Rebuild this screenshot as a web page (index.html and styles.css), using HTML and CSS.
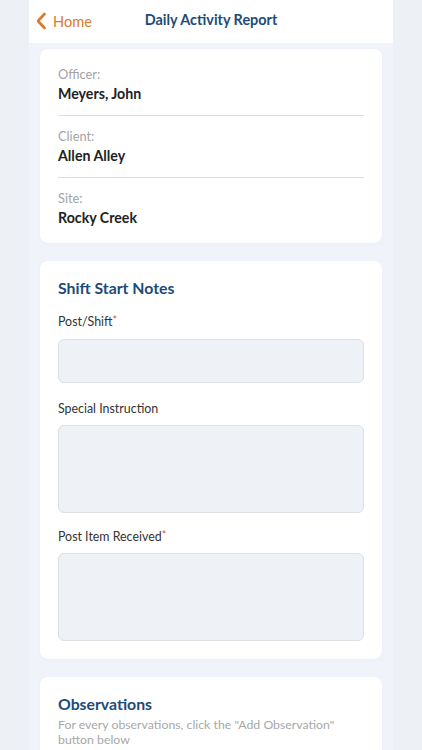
FILE: index.html
```html
<!DOCTYPE html>
<html>
<head>
<meta charset="utf-8">
<link rel="stylesheet" href="styles.css">
</head>
<body>
<div class="app">
  <header class="topbar">
    <a class="back">
      <svg class="chev" width="12" height="18" viewBox="0 0 12 18"><path d="M9.5 2 L3 9 L9.5 16" fill="none" stroke="#d97a2f" stroke-width="2.6" stroke-linecap="round" stroke-linejoin="round"/></svg>
      <span>Home</span>
    </a>
    <h1 class="title">Daily Activity Report</h1>
  </header>
  <main class="content">
    <section class="card info">
      <div class="info-row">
        <div class="info-label">Officer:</div>
        <div class="info-value">Meyers, John</div>
      </div>
      <div class="info-row">
        <div class="info-label">Client:</div>
        <div class="info-value">Allen Alley</div>
      </div>
      <div class="info-row">
        <div class="info-label">Site:</div>
        <div class="info-value">Rocky Creek</div>
      </div>
    </section>
    <section class="card form">
      <h2 class="card-title">Shift Start Notes</h2>
      <div class="field">
        <label class="field-label">Post/Shift<span class="req">*</span></label>
        <div class="input"></div>
      </div>
      <div class="field">
        <label class="field-label">Special Instruction</label>
        <div class="input area"></div>
      </div>
      <div class="field">
        <label class="field-label">Post Item Received<span class="req">*</span></label>
        <div class="input area"></div>
      </div>
    </section>
    <section class="card form">
      <h2 class="card-title">Observations</h2>
      <p class="desc">For every observations, click the "Add Observation" button below</p>
    </section>
  </main>
</div>
</body>
</html>
```
FILE: styles.css
```css
* { box-sizing: border-box; }
html, body { margin: 0; padding: 0; }
body {
  background: #edf0f5;
  font-family: Lato, "Noto Sans", sans-serif;
  height: 750px;
  overflow: hidden;
}
.app {
  width: 364px;
  margin-left: 29px;
  background: #f0f4fa;
  min-height: 750px;
}
.topbar {
  height: 43px;
  background: #ffffff;
  position: relative;
  display: flex;
  align-items: center;
  justify-content: center;
}
.back {
  position: absolute;
  left: 6px;
  top: 12px;
  display: flex;
  align-items: center;
  gap: 6px;
  color: #d97a2f;
  font-size: 14.6px;
}
.chev { display: block; }
.title {
  margin: 0;
  font-size: 14.4px;
  font-weight: 700;
  color: #1d4b79;
  margin-top: -4px;
}
.content {
  padding: 6px 11px 0;
  display: flex;
  flex-direction: column;
  gap: 18px;
}
.card {
  background: #ffffff;
  border-radius: 8px;
  box-shadow: 0 1px 3px rgba(30, 60, 110, 0.04);
}
.info { padding: 17px 18px 15px; }
.info-row {
  padding-bottom: 11px;
  border-bottom: 1px solid #dedede;
  margin-bottom: 12px;
}
.info-row:last-child { border-bottom: none; padding-bottom: 0; margin-bottom: 0; }
.info-label {
  font-size: 12.8px;
  line-height: 16px;
  color: #a3a3a3;
}
.info-value {
  margin-top: 2px;
  font-size: 14.2px;
  line-height: 20px;
  font-weight: 700;
  color: #222222;
}
.form { padding: 16px 18px 18px; }
.card-title {
  margin: 0;
  font-size: 15.8px;
  line-height: 22px;
  font-weight: 700;
  color: #1d4b79;
}
.field { margin-top: 15px; }
.field-label {
  display: block;
  font-size: 12.4px;
  line-height: 16px;
  color: #333333;
  margin-bottom: 8px;
}
.field:first-of-type .field-label { margin-bottom: 8.5px; }
.field + .field { margin-top: 18px; }
.field:last-child { margin-top: 16px; }
.req { color: #d9534f; font-size: 11px; vertical-align: top; line-height: 12px; }
.input {
  height: 44px;
  background: #eef1f5;
  border: 1px solid #dcdfe3;
  border-radius: 6px;
}
.input.area { height: 88px; }
.desc {
  margin: 2px 0 0;
  font-size: 12.3px;
  line-height: 15px;
  color: #a8a8a8;
}
```
